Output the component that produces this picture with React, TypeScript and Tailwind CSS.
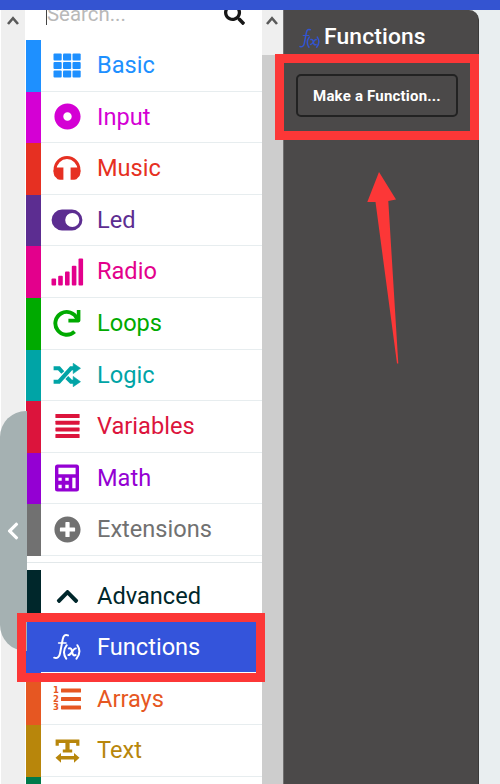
import type { ReactNode } from "react";
import { FaChevronLeft, FaChevronUp, FaDotCircle, FaPlusCircle, FaSearch } from "react-icons/fa";

function GridIcon() {
  return (
    <svg width="28" height="25" viewBox="0 0 28 25" fill="currentColor">
      {[0.5, 10, 19.5].map((x) =>
        [0.5, 9, 17.5].map((y) => <rect key={`${x}-${y}`} x={x} y={y} width="8.2" height="7" rx="1" />),
      )}
    </svg>
  );
}

function HeadphonesIcon() {
  return (
    <svg width="28" height="26" viewBox="0 0 28 26" fill="currentColor">
      <path d="M2.1 17v-2.5a11.9 11.9 0 0 1 23.8 0V17" fill="none" stroke="currentColor" strokeWidth="3" />
      <path d="M.6 15 4 12.6h6.4v12.2H6.8A4.5 4.5 0 0 1 3 22.6 6.6 6.6 0 0 1 .6 18zM27.4 15 24 12.6h-6.4v12.2h3.6a4.5 4.5 0 0 0 3.8-2.2 6.6 6.6 0 0 0 2.4-4.6z" />
    </svg>
  );
}

function ToggleIcon() {
  return (
    <svg width="32" height="22" viewBox="0 0 32 22" fill="currentColor">
      <path
        fillRule="evenodd"
        d="M11 .6h10a10.4 10.4 0 0 1 0 20.8H11A10.4 10.4 0 0 1 11 .6zM21.3 3.9a7.1 7.1 0 1 0 0 14.2 7.1 7.1 0 0 0 0-14.2z"
      />
    </svg>
  );
}

function SignalIcon() {
  return (
    <svg width="33" height="28" viewBox="0 0 33 28" fill="currentColor">
      <rect x="0.5" y="20.5" width="4.6" height="7" rx="1" />
      <rect x="7.2" y="17.7" width="4.6" height="9.8" rx="1" />
      <rect x="14" y="13.5" width="4.6" height="14" rx="1" />
      <rect x="20.8" y="7.8" width="4.6" height="19.7" rx="1" />
      <rect x="27.5" y="0.4" width="4.6" height="27.1" rx="1" />
    </svg>
  );
}

function RedoIcon() {
  return (
    <svg width="28" height="28" viewBox="0 0 28 28" fill="none" stroke="currentColor">
      <path d="M24.2 9.8A11.4 11.4 0 1 0 21.6 22.6" strokeWidth="3.9" />
      <path d="M25.6 1v10.6H15.4" strokeWidth="3.6" strokeLinejoin="round" />
    </svg>
  );
}

function ShuffleIcon() {
  return (
    <svg width="28" height="24" viewBox="0 0 28 24" fill="currentColor">
      <path d="M.6 18.7H6L18 5.3h4M.6 5.3H6l3.8 4.2M13.8 14.5l4.2 4.2h4" fill="none" stroke="currentColor" strokeWidth="4" />
      <path d="M20.2.3 27.5 5.3 20.2 10.6zM20.2 13.4 27.5 18.7 20.2 23.7z" stroke="currentColor" strokeWidth=".6" strokeLinejoin="round" />
    </svg>
  );
}

function LinesIcon() {
  return (
    <svg width="25" height="26" viewBox="0 0 25 26" fill="currentColor">
      {[1, 7.7, 14.4, 21.1].map((y) => (
        <rect key={y} x="0.4" y={y} width="24.2" height="4" rx="0.6" />
      ))}
    </svg>
  );
}

function CalculatorIcon() {
  return (
    <svg width="24" height="28" viewBox="0 0 24 28" fill="currentColor">
      <path
        fillRule="evenodd"
        d="M2.5 .5h19a2.5 2.5 0 0 1 2.5 2.5v22a2.5 2.5 0 0 1-2.5 2.5h-19a2.5 2.5 0 0 1-2.5-2.5v-22a2.5 2.5 0 0 1 2.5-2.5zM3.4 3.7v6.6h17.2v-6.6zM3.4 13.8v3h3.3v-3zM10.3 13.8v3h3.4v-3zM17.3 13.8v10.4h3.3v-10.4zM3.4 20.8v3.4h3.3v-3.4zM10.3 20.8v3.4h3.4v-3.4z"
      />
    </svg>
  );
}

function ListIcon() {
  return (
    <span className="flex items-center gap-[2px]">
      <span className="flex flex-col font-['DejaVu_Sans',sans-serif] text-[8.5px] leading-[8.4px] font-bold">
        <span>1</span>
        <span>2</span>
        <span>3</span>
      </span>
      <svg width="20" height="22" viewBox="0 0 20 22" fill="currentColor">
        <rect y="0.6" width="20" height="4" rx="0.6" />
        <rect y="9" width="20" height="4" rx="0.6" />
        <rect y="17.4" width="20" height="4" rx="0.6" />
      </svg>
    </span>
  );
}

function TextWidthIcon() {
  return (
    <svg width="25" height="24" viewBox="0 0 25 24" fill="currentColor">
      <path d="M.6.4h23.8v6.4h-3.2V3.9h-6.6v6.7h2.6v3H7.8v-3h2.6V3.9H3.8v2.9H.6z" />
      <path d="M.5 18.8 6 13.9v3.2h13v-3.2l5.5 4.9-5.5 4.9v-3.2H6v3.2z" />
    </svg>
  );
}

function FunctionIcon({ small = false }: { small?: boolean }) {
  return (
    <svg
      width={small ? 21 : 28}
      height={small ? 21 : 28}
      viewBox="0 0 28 28"
      fill="none"
      stroke="currentColor"
      strokeLinecap="round"
    >
      <path d="M15 2.4C12 1.2 10.4 2.7 9.7 6.4L7 20.5C6.4 23.8 4.2 26 1.2 24.7" strokeWidth="2" />
      <path d="M5.6 10h7.4" strokeWidth="1.6" />
      <path
        d="M13.7 12.2c-3.4 4.4-3.4 9.2-.5 13.4M24.4 12.2c2.7 4 2.6 9-.9 13.4M15.8 15.4c2.2-.5 2.8.7 3.3 3.4.5 2.8 1.3 4.2 3.5 3.3M22.8 15.4c-2.7-.6-4.4 6.8-7.3 6.7"
        strokeWidth="2"
      />
    </svg>
  );
}

type Category = { name: string; bar: string; text: string; icon: ReactNode };

const basics: Category[] = [
  { name: "Basic", bar: "bg-[#1e90ff]", text: "text-[#1e90ff]", icon: <GridIcon /> },
  { name: "Input", bar: "bg-[#d400d4]", text: "text-[#d400d4]", icon: <FaDotCircle size={27} /> },
  { name: "Music", bar: "bg-[#e63022]", text: "text-[#e63022]", icon: <HeadphonesIcon /> },
  { name: "Led", bar: "bg-[#5c2d91]", text: "text-[#5c2d91]", icon: <ToggleIcon /> },
  { name: "Radio", bar: "bg-[#e3008c]", text: "text-[#e3008c]", icon: <SignalIcon /> },
  { name: "Loops", bar: "bg-[#00aa00]", text: "text-[#00aa00]", icon: <RedoIcon /> },
  { name: "Logic", bar: "bg-[#00a4a6]", text: "text-[#00a4a6]", icon: <ShuffleIcon /> },
  { name: "Variables", bar: "bg-[#dc143c]", text: "text-[#dc143c]", icon: <LinesIcon /> },
  { name: "Math", bar: "bg-[#9400d3]", text: "text-[#9400d3]", icon: <CalculatorIcon /> },
  { name: "Extensions", bar: "bg-[#717171]", text: "text-[#717171]", icon: <FaPlusCircle size={27} /> },
];

const advanced: Category[] = [
  { name: "Arrays", bar: "bg-[#e65722]", text: "text-[#e65722]", icon: <ListIcon /> },
  { name: "Text", bar: "bg-[#b8860b]", text: "text-[#b8860b]", icon: <TextWidthIcon /> },
];

function Row({ category, divider = true, selected = false }: { category: Category; divider?: boolean; selected?: boolean }) {
  return (
    <div className={`flex h-[51.6px] shrink-0 ${selected ? "bg-[#3454db]" : ""}`}>
      <div className={`w-[15px] shrink-0 ${category.bar}`} />
      <div
        className={`flex flex-1 items-center pt-px pl-[9px] ${divider ? "border-b border-[#e7edef]" : ""} ${category.text}`}
      >
        <span className="-mt-px flex w-[34px] shrink-0 items-center justify-center">{category.icon}</span>
        <span className="ml-[13px] text-[23.6px] leading-none">{category.name}</span>
      </div>
    </div>
  );
}

function ScrollArrow() {
  return (
    <svg width="12" height="9" viewBox="0 0 12 9" fill="none" stroke="#5a5a5a" strokeWidth="2.6">
      <path d="M1 8 6 2.2 11 8" />
    </svg>
  );
}

export default function App() {
  return (
    <div className="relative flex h-[784px] w-[500px] flex-col overflow-hidden bg-white font-[Roboto,sans-serif]">
      <div className="h-[10px] shrink-0 bg-[#3454d1]" />
      <div className="flex min-h-0 flex-1">
        <div className="ml-px flex w-[24px] shrink-0 justify-center bg-[#efefef] pt-[6px]">
          <ScrollArrow />
        </div>
        <div className="ml-px flex w-[235.5px] shrink-0 flex-col overflow-hidden bg-white">
          <div className="flex h-[30px] shrink-0 justify-between overflow-hidden pr-[17px] pl-[20px]">
            <span className="-mt-[8px] h-[23px] border-l border-[#444] text-[20.4px] leading-[24px] text-[#b9b9b9]">
              Search...
            </span>
            <FaSearch size={21} className="-mt-[6px] shrink-0 text-[#171717]" />
          </div>
          {basics.map((c) => (
            <Row key={c.name} category={c} />
          ))}
          <div className="mt-[6px] mb-[7px] h-[1.5px] shrink-0 bg-[#e2e8ea]" />
          <Row
            category={{ name: "Advanced", bar: "bg-[#00272b]", text: "text-[#00272b]", icon: <FaChevronUp size={25} /> }}
            divider={false}
          />
          <Row
            category={{ name: "Functions", bar: "bg-[#3454db]", text: "text-white", icon: <FunctionIcon /> }}
            selected
          />
          {advanced.map((c) => (
            <Row key={c.name} category={c} />
          ))}
          <div className="h-[10px] w-[15px] shrink-0 bg-[#007a4b]" />
        </div>
        <div className="flex w-[21.5px] shrink-0 flex-col bg-[#cdcdcd]">
          <div className="flex h-[45px] justify-center bg-[#efefef] pt-[6px]">
            <ScrollArrow />
          </div>
        </div>
        <div className="flex flex-1 bg-[#e9eef0]">
          <div className="flex w-[196px] flex-col rounded-tr-[10px] border-r border-[#3b3a3a] border-l border-l-[#706f6f] bg-[#4b4949]">
            <div className="flex h-[44px] items-center pt-[10px] pl-[15px]">
              <span className="flex w-[25px] pt-[2px] text-[#3454d1]">
                <FunctionIcon small />
              </span>
              <span className="text-[22.8px] leading-none font-medium tracking-[0.15px] text-white">Functions</span>
            </div>
            <button className="mt-[20px] ml-[12px] flex h-[43px] w-[162px] items-center justify-center rounded-[5px] border-[2.5px] border-[#222] pt-px text-[15px] font-bold tracking-[0.2px] text-white">
              Make a Function...
            </button>
          </div>
        </div>
      </div>

      <div className="absolute top-[411px] left-0 flex h-[240px] w-[26.5px] items-center rounded-l-[26px] bg-[#a5b1b2] pl-[3px] text-white">
        <FaChevronLeft size={20} />
      </div>
      <div className="absolute top-[54px] left-[275px] h-[86px] w-[204px] border-[9px] border-[#fc3737]" />
      <div className="absolute top-[613px] left-[17px] h-[69px] w-[248px] border-[9px] border-[#fc3737]" />
      <div className="absolute top-[672px] left-[41px] h-px w-[215px] bg-white" />
      <svg className="absolute top-[170px] left-[360px]" width="45" height="200" viewBox="0 0 45 200" fill="#fc3737">
        <path d="M19 2 36 29.5 28.3 31 38.3 193.5 37 193.5 15.5 32 7.3 32Z" />
      </svg>
    </div>
  );
}
